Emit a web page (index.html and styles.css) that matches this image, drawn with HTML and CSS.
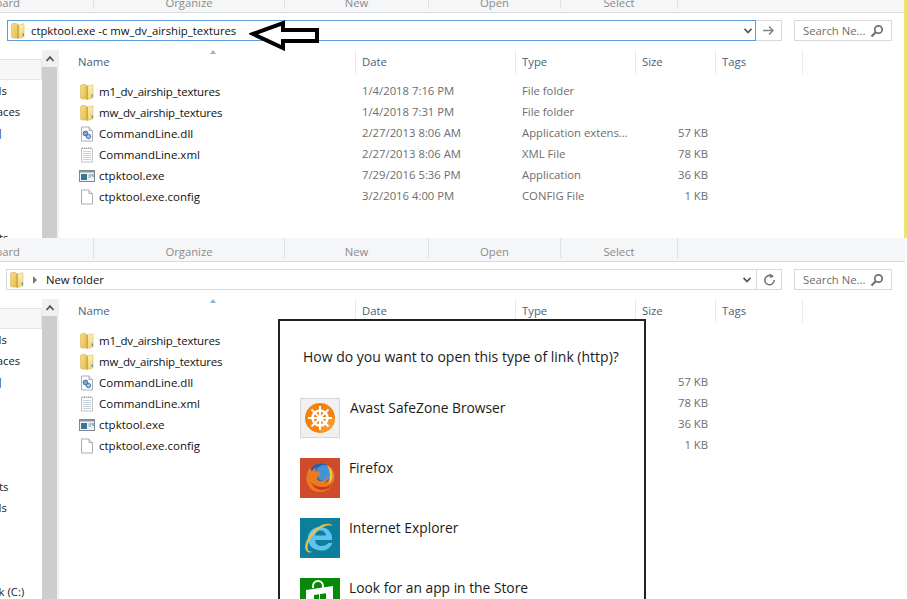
FILE: index.html
```html
<!DOCTYPE html>
<html lang="en">
<head>
<meta charset="utf-8">
<title>Explorer</title>
<link rel="stylesheet" href="styles.css">
</head>
<body>
<svg class="defs" width="0" height="0" aria-hidden="true">
  <defs>
    <linearGradient id="fl" x1="0" y1="0" x2="1" y2="1"><stop offset="0" stop-color="#f6dc85"/><stop offset="1" stop-color="#e6bd4e"/></linearGradient>
    <linearGradient id="fr" x1="0" y1="0" x2="0" y2="1"><stop offset="0" stop-color="#fdeeb4"/><stop offset="1" stop-color="#f5d36c"/></linearGradient>
    <symbol id="i-folder" viewBox="0 0 16 16">
      <path d="M1.500 1.500 2.500.5h4L8 1.500V15H2.500l-1-1z" fill="url(#fl)" stroke="#d8b655" stroke-width=".6"/>
      <path d="M8 2 14 .8V14l-6 1.600z" fill="url(#fr)" stroke="#dcbf66" stroke-width=".6"/>
      <rect x="7.500" y="2" width="1.300" height="13.500" fill="#c8a040"/>
      <rect x="12.600" y="10.500" width="1.400" height="2.400" fill="#4c8ed0"/>
    </symbol>
    <symbol id="i-dll" viewBox="0 0 16 16">
      <path d="M2.500 1H10l3.500 3.500V15h-11z" fill="#fff" stroke="#a9b0b8"/>
      <path d="M10 1v3.500h3.500" fill="#e6e9ed" stroke="#a9b0b8"/>
      <circle cx="6.500" cy="7.500" r="2.400" fill="#7ea6d6" stroke="#35669f" stroke-width=".9"/>
      <circle cx="9.500" cy="10.500" r="2.200" fill="#a7c3e4" stroke="#35669f" stroke-width=".9"/>
    </symbol>
    <symbol id="i-xml" viewBox="0 0 16 16">
      <path d="M2.500 1.500h11v13.500h-11z" fill="#fdfdfd" stroke="#c0c4c9"/>
      <path d="M4 4.500h8M4 6.500h8M4 8.500h8M4 10.500h8M4 12.500h8" stroke="#c3ccd6" stroke-width=".9"/>
      <path d="M3.500 0v2M5.500 0v2M7.500 0v2M9.500 0v2M11.500 0v2" stroke="#a9afb6" stroke-width=".8"/>
    </symbol>
    <symbol id="i-exe" viewBox="0 0 16 16">
      <rect x=".5" y="2.500" width="15" height="11" fill="#f2f4f6" stroke="#7f8790"/>
      <rect x="1" y="3" width="14" height="1.500" fill="#8d959d"/>
      <rect x="2" y="6" width="6" height="6" fill="#2e7f8f"/>
      <rect x="2" y="9" width="6" height="3" fill="#3c6fa5"/>
      <path d="M9.500 7H13M9.500 9H12" stroke="#6f8fae"/>
      <path d="M14 6v3" stroke="#3a8a3f"/>
    </symbol>
    <symbol id="i-config" viewBox="0 0 16 16">
      <path d="M2.500 1H10l3.500 3.500V15h-11z" fill="#fff" stroke="#a9adb2"/>
      <path d="M10 1v3.500h3.500" fill="#eceef0" stroke="#a9adb2"/>
    </symbol>
    <symbol id="i-search" viewBox="0 0 14 14">
      <circle cx="8.500" cy="5.500" r="3.700" fill="none" stroke="#6f6f6f" stroke-width="1.700"/>
      <path d="M6 8 1.500 12.500" stroke="#6f6f6f" stroke-width="2.200"/>
    </symbol>
    <symbol id="i-chev" viewBox="0 0 10 8">
      <path d="M1.500 1.800 5 5.500l3.500-3.700" fill="none" stroke="#55595e" stroke-width="1.800"/>
    </symbol>
    <symbol id="i-up" viewBox="0 0 10 8">
      <path d="M1.500 6 5 2.200 8.500 6" fill="none" stroke="#555" stroke-width="1.800"/>
    </symbol>
  </defs>
</svg>

<section class="pane pane-top">
  <div class="ribbon">
    <span class="group group-clip">Clipboard</span>
    <span class="group group-org">Organize</span>
    <span class="group group-new">New</span>
    <span class="group group-open">Open</span>
    <span class="group group-sel">Select</span>
  </div>
  <div class="addr-row">
    <div class="addr addr-active">
      <svg class="folder-ic"><use href="#i-folder"/></svg>
      <span class="addr-cmd">ctpktool.exe -c mw_dv_airship_textures</span>
      <svg class="chev"><use href="#i-chev"/></svg>
    </div>
    <div class="go">
      <svg width="13" height="11" viewBox="0 0 13 11"><path d="M1 5.500h10M7 1.500l4 4-4 4" fill="none" stroke="#858585" stroke-width="1.500"/></svg>
    </div>
    <div class="search"><span>Search Ne...</span><svg class="search-ic"><use href="#i-search"/></svg></div>
  </div>
  <div class="body">
    <nav class="nav">
      <div class="nav-sel"></div>
      <div class="nav-row">Downloads</div>
      <div class="nav-row">Recent places</div>
      <div class="nav-row">Photos [1]</div>
      <div class="nav-row"></div>
      <div class="nav-row"></div>
      <div class="nav-row"></div>
      <div class="nav-row"></div>
      <div class="nav-row">Documents</div>
    </nav>
    <div class="scroll"><div class="scroll-btn"><svg class="up"><use href="#i-up"/></svg></div><div class="scroll-thumb"></div></div>
    <div class="list">
      <div class="head">
        <div class="hc hc-name">Name<span class="sort"></span></div>
        <div class="hc">Date</div>
        <div class="hc">Type</div>
        <div class="hc">Size</div>
        <div class="hc">Tags</div>
      </div>
      <div class="file"><div class="fname fname-folder"><svg class="fi"><use href="#i-folder"/></svg>m1_dv_airship_textures</div><div class="fd">1/4/2018 7:16 PM</div><div class="fd">File folder</div><div class="fs"></div></div>
      <div class="file"><div class="fname fname-folder"><svg class="fi"><use href="#i-folder"/></svg>mw_dv_airship_textures</div><div class="fd">1/4/2018 7:31 PM</div><div class="fd">File folder</div><div class="fs"></div></div>
      <div class="file"><div class="fname"><svg class="fi"><use href="#i-dll"/></svg>CommandLine.dll</div><div class="fd">2/27/2013 8:06 AM</div><div class="fd">Application extens...</div><div class="fs">57 KB</div></div>
      <div class="file"><div class="fname"><svg class="fi"><use href="#i-xml"/></svg>CommandLine.xml</div><div class="fd">2/27/2013 8:06 AM</div><div class="fd">XML File</div><div class="fs">78 KB</div></div>
      <div class="file"><div class="fname"><svg class="fi"><use href="#i-exe"/></svg>ctpktool.exe</div><div class="fd">7/29/2016 5:36 PM</div><div class="fd">Application</div><div class="fs">36 KB</div></div>
      <div class="file"><div class="fname"><svg class="fi"><use href="#i-config"/></svg>ctpktool.exe.config</div><div class="fd">3/2/2016 4:00 PM</div><div class="fd">CONFIG File</div><div class="fs">1 KB</div></div>
    </div>
  </div>
  <svg class="hand-arrow" width="74" height="32" viewBox="0 0 74 32"><path d="M4 15 34 4v7h34v11H34v7z" fill="#fff" stroke="#000" stroke-width="4" stroke-linejoin="miter"/></svg>
</section>

<section class="pane pane-bottom">
  <div class="ribbon ribbon-full">
    <span class="group group-clip">Clipboard</span>
    <span class="group group-org">Organize</span>
    <span class="group group-new">New</span>
    <span class="group group-open">Open</span>
    <span class="group group-sel">Select</span>
  </div>
  <div class="addr-row">
    <div class="addr addr-idle">
      <svg class="folder-ic"><use href="#i-folder"/></svg>
      <span class="crumb-arrow"></span>
      <span class="addr-crumb">New folder</span>
      <svg class="chev"><use href="#i-chev"/></svg>
      <span class="refresh">
        <svg width="13" height="14" viewBox="0 0 13 14"><path d="M9.700 3.600A4.700 4.700 0 1 0 11.200 7" fill="none" stroke="#6f6f6f" stroke-width="1.500"/><path d="M6.500 .5l4.500 3-4 1.500z" fill="#6f6f6f"/></svg>
      </span>
    </div>
    <div class="search"><span>Search Ne...</span><svg class="search-ic"><use href="#i-search"/></svg></div>
  </div>
  <div class="body">
    <nav class="nav">
      <div class="nav-sel"></div>
      <div class="nav-row">Downloads</div>
      <div class="nav-row">Recent places</div>
      <div class="nav-row">Photos [1]</div>
      <div class="nav-row"></div>
      <div class="nav-row"></div>
      <div class="nav-row"></div>
      <div class="nav-row"></div>
      <div class="nav-row">Documents</div>
      <div class="nav-row">Downloads</div>
      <div class="nav-row"></div>
      <div class="nav-row"></div>
      <div class="nav-row"></div>
      <div class="nav-row nav-indent">Local Disk (C:)</div>
    </nav>
    <div class="scroll"><div class="scroll-btn"><svg class="up"><use href="#i-up"/></svg></div><div class="scroll-thumb"></div></div>
    <div class="list">
      <div class="head">
        <div class="hc hc-name">Name<span class="sort"></span></div>
        <div class="hc">Date</div>
        <div class="hc">Type</div>
        <div class="hc">Size</div>
        <div class="hc">Tags</div>
      </div>
      <div class="file"><div class="fname fname-folder"><svg class="fi"><use href="#i-folder"/></svg>m1_dv_airship_textures</div><div class="fd"></div><div class="fd"></div><div class="fs"></div></div>
      <div class="file"><div class="fname fname-folder"><svg class="fi"><use href="#i-folder"/></svg>mw_dv_airship_textures</div><div class="fd"></div><div class="fd"></div><div class="fs"></div></div>
      <div class="file"><div class="fname"><svg class="fi"><use href="#i-dll"/></svg>CommandLine.dll</div><div class="fd"></div><div class="fd"></div><div class="fs">57 KB</div></div>
      <div class="file"><div class="fname"><svg class="fi"><use href="#i-xml"/></svg>CommandLine.xml</div><div class="fd"></div><div class="fd"></div><div class="fs">78 KB</div></div>
      <div class="file"><div class="fname"><svg class="fi"><use href="#i-exe"/></svg>ctpktool.exe</div><div class="fd"></div><div class="fd"></div><div class="fs">36 KB</div></div>
      <div class="file"><div class="fname"><svg class="fi"><use href="#i-config"/></svg>ctpktool.exe.config</div><div class="fd"></div><div class="fd"></div><div class="fs">1 KB</div></div>
    </div>
  </div>
</section>

<aside class="dialog">
  <h1 class="dlg-title">How do you want to open this type of link (http)?</h1>
  <div class="app">
    <svg class="app-ic" viewBox="0 0 40 40">
      <rect x=".5" y=".5" width="39" height="39" fill="#f0f0f0" stroke="#d6d6d6"/>
      <circle cx="20" cy="20" r="15" fill="#f5820f"/>
      <path d="M20 20 35 20A15 15 0 0 1 20 35z" fill="#f79a2e"/>
      <circle cx="20" cy="20" r="7.500" fill="none" stroke="#fff" stroke-width="2.500"/>
      <circle cx="20" cy="20" r="2.500" fill="#fff"/>
      <path d="M20 8v24M8 20h24M11.500 11.500l17 17M28.500 11.500l-17 17" stroke="#fff" stroke-width="2"/>
    </svg>
    <span class="app-name app-name-first">Avast SafeZone Browser</span>
  </div>
  <div class="app">
    <svg class="app-ic" viewBox="0 0 40 40">
      <rect width="40" height="40" fill="#d04b2a"/>
      <circle cx="21" cy="19" r="13.500" fill="#2a5fa8"/>
      <circle cx="24" cy="15" r="8" fill="#3f93d6"/>
      <path d="M27 7c5 2 8 7 7.500 12C34 28 27 34 20 34 12 34 6.500 28 6.500 20.500 6.500 15 9 10.500 11 9c-.5 2 0 3.500 1 4.500 1-2 3-3.500 5-4-1.500 1.500-2 3-1.500 3.500 2 1 5 1 5 3 0 1.500-3 2-3.500 3.500-.5 2 1.500 4 4.500 3.500 3-.5 5-2 6-5 .5 3-1 5.500-3 7 3-.5 6-4 6-9 0-4-1.500-7-3.500-9z" fill="#ee7a1e"/>
      <path d="M11 24c2 5 6 8 11 8 5 0 9-3 11-8-2 3-6 5-10 5s-9-1-12-5z" fill="#c9381c"/>
      <path d="M27 7c4 3 6 7 5.500 12-.5 3-2 5.500-4 7 1-2 1.500-4 1-6 1-3 0-9-2.500-13z" fill="#f7c338"/>
    </svg>
    <span class="app-name">Firefox</span>
  </div>
  <div class="app">
    <svg class="app-ic" viewBox="0 0 40 40">
      <rect width="40" height="40" fill="#0d7f9d"/>
      <path d="M8 20a12 11 0 0 1 24 0v2H15c.5 4 3 6 6.500 6 3 0 5-1 7-3h4c-2 5-6 7.500-11 7.500C13 32.500 8 27.500 8 20zm7-2.500h11c-.3-3-2.300-5-5.500-5s-5 2-5.500 5z" fill="#5ec4ef" fill-rule="evenodd"/>
      <path d="M6 32C3 27 10 13 20 8c6-3 11-3 12.500 0-3-1.500-8-.5-13 3C11 17 6 26 8 32c1 1.500 3 2 5 1.500-3 2-6 1-7-1.500z" fill="#e7c24a"/>
    </svg>
    <span class="app-name">Internet Explorer</span>
  </div>
  <div class="app">
    <svg class="app-ic" viewBox="0 0 40 40">
      <rect width="40" height="40" fill="#078a07"/>
      <path d="M13 10V8a5 5 0 0 1 10 0v2" fill="none" stroke="#fff" stroke-width="2"/>
      <path d="M6 12 33 8v26H6z" fill="#fff"/>
      <path d="M14 17l5-.7v5h-5zM20 16.100l6-.8v6h-6zM14 22h5v5l-5-.6zM20 22h6v6l-6-.8z" fill="#078a07"/>
    </svg>
    <span class="app-name">Look for an app in the Store</span>
  </div>
</aside>
</body>
</html>
```

FILE: styles.css
```css
* { box-sizing: border-box; }

html, body {
  margin: 0;
  width: 907px;
  height: 599px;
  overflow: hidden;
  background: #fff;
}

body {
  position: relative;
  font-family: "Open Sans", "Noto Sans", "Liberation Sans", sans-serif;
  font-size: 11.3px;
  color: #1b1b1b;
}

.defs { position: absolute; }

.pane { overflow: hidden; position: relative; }
.pane-top { height: 238px; border-right: 3px solid #efe36c; }
.pane-bottom { height: 361px; }

/* ribbon */
.ribbon {
  display: flex;
  height: 13px;
  background: #f5f6f7;
  border-bottom: 1px solid #dadbdc;
  color: #8b8b8b;
  align-items: flex-end;
}
.ribbon-full { height: 24px; margin-right: 2px; }
.group {
  display: flex;
  justify-content: center;
  align-items: flex-end;
  align-self: stretch;
  margin-bottom: 3px;
  border-right: 1px solid #dfe0e1;
  line-height: 13px;
  white-space: nowrap;
}
.group-clip { width: 94px; justify-content: flex-end; padding-right: 73px; }
.group-org { width: 191px; }
.group-new { width: 144px; }
.group-open { width: 132px; }
.group-sel { width: 117px; }

/* address row */
.addr-row {
  display: flex;
  height: 21px;
  margin-top: 7px;
  padding-left: 6px;
}
.addr {
  position: relative;
  display: flex;
  align-items: center;
  height: 21px;
  background: #fff;
}
.addr-active {
  width: 749px;
  margin-left: 1px;
  border: 1px solid #5b9bdc;
}
.addr-idle {
  width: 776px;
  border: 1px solid #d9d9d9;
}
.folder-ic { width: 16px; height: 16px; margin-left: 2px; flex: none; }
.addr-cmd { margin-left: 5px; color: #111; flex: 1; }
.addr-crumb { margin-left: 9px; color: #111; flex: 1; }
.crumb-arrow {
  width: 0;
  height: 0;
  margin-left: 8px;
  border-left: 4px solid #757575;
  border-top: 4px solid transparent;
  border-bottom: 4px solid transparent;
}
.chev { width: 10px; height: 8px; flex: none; margin-right: 2px; }
.refresh {
  display: flex;
  align-items: center;
  justify-content: center;
  width: 25px;
  height: 19px;
  margin-left: 2px;
  border-left: 1px solid #d9d9d9;
}
.go {
  display: flex;
  align-items: center;
  justify-content: center;
  width: 26px;
  height: 21px;
  border: 1px solid #d9d9d9;
  border-left: 0;
}
.search {
  display: flex;
  align-items: center;
  justify-content: space-between;
  width: 98px;
  height: 21px;
  margin-left: 12px;
  padding: 0 7px 0 8px;
  border: 1px solid #d9d9d9;
  color: #6d6d6d;
}
.search-ic { width: 14px; height: 14px; flex: none; }

/* body */
.body {
  display: flex;
  margin-top: 9px;
  height: 400px;
}
.nav { width: 42px; flex: none; overflow: hidden; }
.nav-sel {
  height: 21px;
  margin-top: 9px;
  margin-left: -10px;
  background: #f7f7f7;
  border: 1px solid #e4e4e4;
}
.nav-row {
  height: 21px;
  margin-left: -52px;
  line-height: 21px;
  white-space: nowrap;
  color: #1b1b1b;
}
.nav-indent { margin-left: -48px; }
.scroll { width: 17px; flex: none; border-right: 2px solid #f0f0f0; }
.scroll-btn {
  display: flex;
  align-items: center;
  justify-content: center;
  height: 17px;
  background: #f0f0f0;
}
.up { width: 10px; height: 8px; }
.scroll-thumb { height: 400px; background: #cdcdcd; }

/* list */
.list { margin-left: -2px; flex: 1; }
.head, .file {
  display: grid;
  grid-template-columns: 299px 160px 120px 80px 87px;
}
.head { height: 21px; margin-bottom: 10px; }
.hc {
  position: relative;
  padding-left: 6px;
  line-height: 24px;
  color: #4c607a;
  border-right: 1px solid #e6ebf1;
}
.hc-name { padding-left: 21px; }
.sort {
  position: absolute;
  top: 0;
  left: 153px;
  width: 0;
  height: 0;
  border-left: 3.500px solid transparent;
  border-right: 3.500px solid transparent;
  border-bottom: 4px solid #8fb4d6;
}
.file { height: 21px; line-height: 20px; }
.fname {
  display: flex;
  align-items: center;
  gap: 4px;
  padding-left: 22px;
  white-space: nowrap;
  font-size: 11.5px;
  color: #111;
}
.fname-folder { letter-spacing: -.23px; }
.fi { width: 16px; height: 16px; flex: none; }
.fd { padding-left: 6px; color: #6d6d6d; white-space: nowrap; }
.fs { padding-right: 8px; text-align: right; color: #6d6d6d; }

/* annotation arrow */
.hand-arrow { position: absolute; top: 19px; left: 249px; }

/* dialog */
.dialog {
  position: absolute;
  left: 278px;
  top: 319px;
  width: 368px;
  height: 320px;
  padding: 26px 0 0 20px;
  background: #fff;
  border: 2px solid #222;
}
.dlg-title {
  margin: 0 0 31px 3px;
  font-size: 14px;
  font-weight: 400;
  line-height: 20px;
  color: #1b1b1b;
  white-space: nowrap;
}
.app {
  display: flex;
  height: 40px;
  margin-bottom: 20px;
  gap: 9px;
}
.app-ic { width: 40px; height: 40px; flex: none; }
.app-name { line-height: 20px; color: #1b1b1b; font-size: 13.8px; }
.app-name-first { margin-left: 1px; }
```
